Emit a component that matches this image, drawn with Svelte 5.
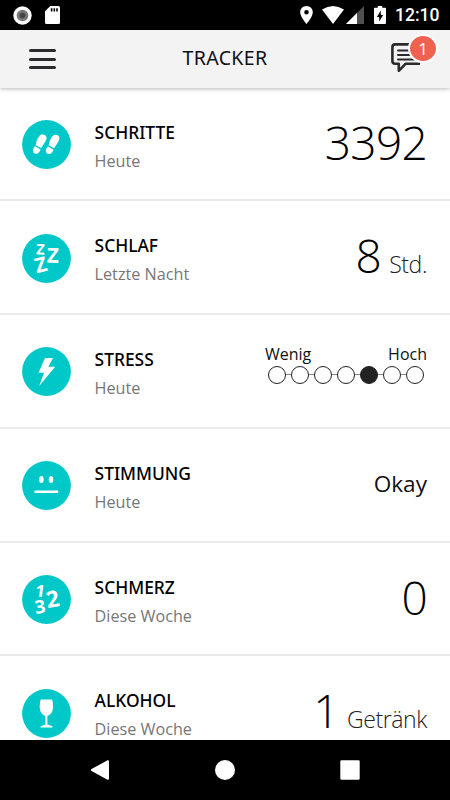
<script lang="ts">
  type Row = {
    icon: string;
    title: string;
    period: string;
    value?: string;
    unit?: string;
    text?: string;
    level?: number;
  };

  const rows: Row[] = [
    { icon: 'steps', title: 'SCHRITTE', period: 'Heute', value: '3392' },
    { icon: 'sleep', title: 'SCHLAF', period: 'Letzte Nacht', value: '8', unit: 'Std.' },
    { icon: 'stress', title: 'STRESS', period: 'Heute', level: 5 },
    { icon: 'mood', title: 'STIMMUNG', period: 'Heute', text: 'Okay' },
    { icon: 'pain', title: 'SCHMERZ', period: 'Diese Woche', value: '0' },
    { icon: 'alcohol', title: 'ALKOHOL', period: 'Diese Woche', value: '1', unit: 'Getränk' }
  ];

  const steps = [1, 2, 3, 4, 5, 6, 7];
  let unread = $state(1);
</script>

{#snippet foot()}
  <path d="M15.2 14.3C17.6 13.4 20.2 13.9 20.8 16.4C21.4 20.2 18.8 23.6 17.2 27.6L11.4 25.6C11.3 21.4 12.3 16.3 15.2 14.3Z" />
  <path d="M10.9 26.8L16.8 29C16 32.8 14.2 34.4 11.8 34.1C8.8 33.4 8.7 29.6 10.9 26.8Z" />
{/snippet}

{#snippet trackerIcon(name: string)}
  <svg class="icon" viewBox="0 0 49 49">
    <circle cx="24.5" cy="24.5" r="24.4" fill="#00c8c9" />
    <g fill="#fff">
      {#if name === 'steps'}
        <g transform="translate(2.6 0) rotate(9 14 24)">{@render foot()}</g>
        <g transform="translate(15.5 .3) rotate(9 14 24)">{@render foot()}</g>
      {:else if name === 'sleep'}
        <text x="14.4" y="20.4" font-size="14.5" transform="rotate(3 18 15)">Z</text>
        <text x="25" y="28.6" font-size="20.5" transform="rotate(2 31 21)">Z</text>
        <text x="13" y="38" font-size="20.5" transform="rotate(-14 19 31)">Z</text>
      {:else if name === 'stress'}
        <path d="M23 11H31L26.3 19.8H33.2L17.2 39L22 25.7H16.5Z" />
      {:else if name === 'mood'}
        <ellipse cx="19.4" cy="18.4" rx="2.3" ry="3.5" />
        <ellipse cx="29" cy="18.4" rx="2.3" ry="3.5" />
        <rect x="12.3" y="29.5" width="24" height="2.4" rx="1" />
      {:else if name === 'pain'}
        <text x="13.2" y="22" font-size="17" transform="rotate(8 18 16)">1</text>
        <text x="24" y="32.3" font-size="23" transform="rotate(-10 30 24)">2</text>
        <text x="12.8" y="38.3" font-size="18.5" transform="rotate(-8 18 32)">3</text>
      {:else}
        <path d="M18.7 10.6H30.1C31.6 16.5 32.3 24.8 25.4 26.9V35.6L30.4 37.2V38.4H18.6V37.2L23.4 35.6V26.9C16.5 24.8 17.2 16.5 18.7 10.6Z" />
      {/if}
    </g>
  </svg>
{/snippet}

<div class="screen">
  <div class="statusbar">
    <div class="group">
      <svg class="rec" viewBox="0 0 19 19">
        <circle cx="9.5" cy="9.5" r="9.2" fill="#fff" />
        <circle cx="9.5" cy="9.5" r="5.8" fill="#777" />
        <circle cx="9.5" cy="9.5" r="2.8" fill="#444" />
      </svg>
      <svg class="sd" viewBox="0 0 15 18">
        <path d="M5.3 0H13.5Q15 0 15 1.5V16.5Q15 18 13.5 18H1.5Q0 18 0 16.5V5.3Z" fill="#fff" />
        <path d="M5.8 2.2H7.4V5.6H5.8ZM8.5 2.2H10.1V5.6H8.5ZM11.2 2.2H12.8V5.6H11.2Z" />
      </svg>
    </div>
    <div class="group">
      <svg class="pin" viewBox="0 0 13 18" fill="#fff">
        <path fill-rule="evenodd" d="M6.5 0C2.9 0 .2 2.8.2 6.3C.2 11 6.5 18 6.5 18S12.8 11 12.8 6.3C12.8 2.8 10.1 0 6.5 0ZM6.5 4A2.3 2.3 0 1 1 6.5 8.6A2.3 2.3 0 1 1 6.5 4Z" />
      </svg>
      <svg class="wifi" viewBox="0 0 22 18" fill="#fff">
        <path d="M0 3.6Q11-3.6 22 3.6L11 18Z" />
      </svg>
      <svg class="cell" viewBox="0 0 18 18">
        <path d="M0 18L18 0V18Z" fill="#505050" />
        <path d="M0 18L11 7V18Z" fill="#fff" />
      </svg>
      <svg class="battery" viewBox="0 0 12 18">
        <path d="M3.8 0H8.2V1.8H11Q12 1.8 12 2.8V17Q12 18 11 18H1Q0 18 0 17V2.8Q0 1.8 1 1.8H3.8Z" fill="#fff" />
        <path d="M6.8 4.6V9H9.2L5.2 15.6V11H2.8Z" />
      </svg>
      <span class="clock">12:10</span>
    </div>
  </div>

  <header>
    <button class="menu" aria-label="Menu">
      <span></span>
      <span></span>
      <span></span>
    </button>
    <h1>TRACKER</h1>
    <button class="messages" aria-label="Messages">
      <svg viewBox="0 0 34 30" fill="none" stroke="#2b2b2d" stroke-width="2.6" stroke-linejoin="round" stroke-linecap="round">
        <path d="M28 1.4H4.2Q1.4 1.4 1.4 4.2V18Q1.4 20.8 4.2 20.8H7.8V27.8L14.5 20.8H28" />
        <path d="M7 7.4H20M7 12H20M7 16.4H23" stroke-width="2" />
      </svg>
      {#if unread}
        <span class="badge">{unread}</span>
      {/if}
    </button>
  </header>

  <main>
    {#each rows as row}
      <section class="row">
        {@render trackerIcon(row.icon)}
        <div class="label">
          <h2>{row.title}</h2>
          <p>{row.period}</p>
        </div>
        {#if row.level}
          <div class="scale">
            <div class="ends"><span>Wenig</span><span>Hoch</span></div>
            <div class="dots">
              {#each steps as step}
                <i class:on={step === row.level}></i>
              {/each}
            </div>
          </div>
        {:else if row.text}
          <div class="text">{row.text}</div>
        {:else}
          <div class="value">
            <span>{row.value}</span>
            {#if row.unit}<small>{row.unit}</small>{/if}
          </div>
        {/if}
      </section>
    {/each}
  </main>

  <nav>
    <svg viewBox="0 0 20 20"><path d="M18 1.2V18.8L2 10Z" stroke="#fff" stroke-width="2" stroke-linejoin="round" /></svg>
    <svg viewBox="0 0 20 20"><circle cx="10" cy="10" r="10" /></svg>
    <svg viewBox="0 0 20 20"><rect x=".3" y=".3" width="19.4" height="19.4" rx="1.2" /></svg>
  </nav>
</div>

<style>
  :global(body) {
    margin: 0;
  }
  .screen {
    display: flex;
    flex-direction: column;
    width: 450px;
    height: 800px;
    overflow: hidden;
    background: #fff;
    color: #111;
    font-family: 'Open Sans', 'Noto Sans', sans-serif;
  }
  svg {
    display: block;
    flex: none;
  }
  h1, h2, p {
    margin: 0;
    font-weight: 400;
  }
  button {
    padding: 0;
    border: 0;
    background: none;
    font: inherit;
  }

  .statusbar {
    display: flex;
    justify-content: space-between;
    box-sizing: border-box;
    flex: none;
    height: 30px;
    padding: 0 10px 0 13px;
    background: #000;
  }
  .group {
    display: flex;
    align-items: center;
  }
  .rec { width: 19px; height: 19px; }
  .sd { width: 15px; height: 18px; margin-left: 13px; }
  .pin { width: 13px; height: 18px; }
  .wifi { width: 22px; height: 18px; margin-left: 9px; }
  .cell { width: 18px; height: 18px; margin-left: 2px; }
  .battery { width: 12px; height: 18px; margin-left: 10px; }
  .clock {
    width: 45px;
    margin-left: 9px;
    color: #fff;
    font: 500 17.5px/31px Roboto, sans-serif;
    white-space: nowrap;
  }

  header {
    position: relative;
    z-index: 1;
    display: flex;
    align-items: center;
    justify-content: space-between;
    box-sizing: border-box;
    flex: none;
    height: 58px;
    padding: 0 13px 2px 29px;
    background: #f3f3f3;
    box-shadow: 0 1px 4px rgba(0, 0, 0, 0.28);
  }
  .menu {
    display: flex;
    flex-direction: column;
    gap: 5.6px;
    width: 30px;
    margin-top: 2px;
  }
  .menu span {
    width: 27px;
    height: 3px;
    border-radius: 2px;
    background: #2b2b2d;
  }
  h1 {
    font-family: 'Noto Sans', sans-serif;
    font-size: 19.5px;
    letter-spacing: 0.4px;
    line-height: 28px;
  }
  .messages {
    position: relative;
    width: 46px;
    height: 30px;
  }
  .messages svg {
    width: 34px;
    height: 30px;
  }
  .badge {
    position: absolute;
    top: -9px;
    right: -1px;
    width: 26px;
    height: 25px;
    border: 2.5px solid #fff;
    border-radius: 50%;
    background: #ef624f;
    color: #fff;
    font-size: 17px;
    font-weight: 500;
    line-height: 25px;
    text-align: center;
  }

  main {
    flex: 1;
    min-height: 0;
    overflow: hidden;
  }
  .row {
    display: flex;
    align-items: flex-start;
    box-sizing: border-box;
    height: 113.8px;
    padding: 32.4px 23px 0 22.4px;
    border-bottom: 2px solid #eaeaea;
  }
  .row:first-child {
    height: 113.2px;
    padding-top: 32px;
  }
  .icon {
    width: 49px;
    height: 49px;
  }
  .icon text {
    font-family: 'Open Sans', sans-serif;
    font-weight: 700;
  }
  .label {
    flex: 1;
    margin-left: 23.2px;
  }
  h2 {
    margin-top: -0.4px;
    color: #000;
    font-family: 'Noto Sans', sans-serif;
    font-size: 17.4px;
    font-weight: 500;
    line-height: 24px;
  }
  p {
    margin-top: 5px;
    color: #777;
    font-size: 16.2px;
    line-height: 24px;
  }
  .value {
    margin-top: -9.4px;
    color: #000;
    font-size: 46px;
    font-weight: 300;
    letter-spacing: -0.7px;
    line-height: 62px;
    white-space: nowrap;
  }
  .value small {
    margin-left: -3px;
    color: #222;
    font-size: 23px;
    letter-spacing: -0.4px;
  }
  .text {
    margin-top: 6.6px;
    font-size: 22.6px;
    line-height: 32px;
  }
  .scale {
    width: 162px;
  }
  .ends {
    display: flex;
    justify-content: space-between;
    margin-top: -5.4px;
    font-size: 16px;
    line-height: 24px;
  }
  .dots {
    display: flex;
    justify-content: space-between;
    margin: 0 3px;
    background: linear-gradient(#888, #888) center / 100% 1px no-repeat;
  }
  .dots i {
    box-sizing: border-box;
    width: 18px;
    height: 18px;
    border: 1px solid #222;
    border-radius: 50%;
    background: #fff;
  }
  .dots .on {
    background: #222;
  }

  nav {
    display: flex;
    align-items: center;
    justify-content: center;
    gap: 105px;
    flex: none;
    height: 60px;
    background: #000;
  }
  nav svg {
    width: 20px;
    height: 20px;
    fill: #fff;
  }
</style>
